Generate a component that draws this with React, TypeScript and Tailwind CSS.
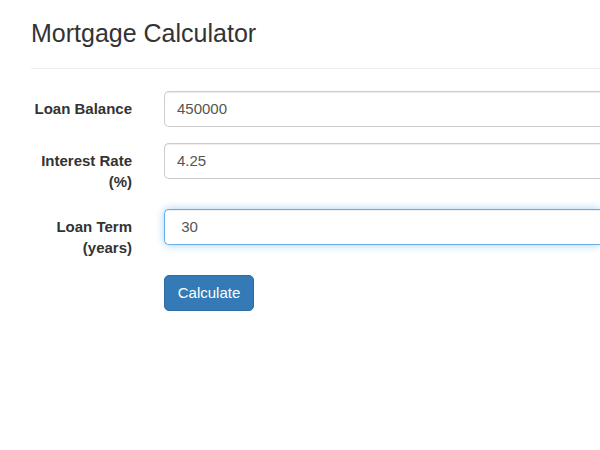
const inputBase =
  "h-9 w-full rounded-l-[5px] border border-r-0 bg-white px-3 pb-0.5 text-[15px] leading-[22px] text-[#555555] outline-none";
const inputPlain = inputBase + " border-[#cccccc] shadow-[inset_0_1px_1px_rgba(0,0,0,0.075)]";
const inputActive =
  inputBase +
  " border-[#66afe9] shadow-[inset_0_1px_1px_rgba(0,0,0,0.075),0_0_8px_rgba(102,175,233,0.6)]";

const fields = [
  { id: "balance", label: "Loan Balance", value: "450000", active: false },
  { id: "rate", label: "Interest Rate (%)", value: "4.25", active: false },
  { id: "term", label: "Loan Term (years)", value: " 30", active: true },
];

export default function App() {
  return (
    <main className="min-h-screen overflow-hidden bg-white pt-4 pl-[31px] font-['Liberation_Sans',Arial,sans-serif] text-[#333333]">
      <h1 className="border-b border-[#eeeeee] pb-[18px] text-[25px] leading-[34px]">Mortgage Calculator</h1>
      <form className="mt-[22px] flex flex-col gap-4" onSubmit={(e) => e.preventDefault()}>
        {fields.map((f) => (
          <div key={f.id} className="flex items-start">
            <label
              htmlFor={f.id}
              className="mr-8 w-[101px] shrink-0 pt-[7px] pb-px text-right text-[15px] leading-[21px] font-bold"
            >
              {f.label}
            </label>
            <input id={f.id} defaultValue={f.value} className={f.active ? inputActive : inputPlain} />
          </div>
        ))}
        <button
          type="submit"
          className="ml-[133px] h-9 w-[90px] rounded-[5px] border border-[#2e6da4] bg-[#337ab7] text-[15px] leading-[22px] text-white"
        >
          Calculate
        </button>
      </form>
    </main>
  );
}
